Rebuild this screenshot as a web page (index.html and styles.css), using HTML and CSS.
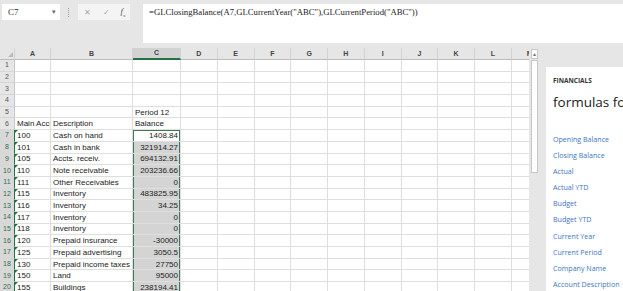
FILE: index.html
```html
<!DOCTYPE html>
<html lang="en">

<head>
    <meta charset="UTF-8">
    <title>GL Closing Balance</title>
    <link rel="stylesheet" href="styles.css">
</head>

<body>
    <div class="formula-bar">
        <div class="name-box">C7<span class="caret">&#9662;</span></div>
        <div class="grip"></div>
        <div class="fn-buttons">
            <span class="fn-x">&#10005;</span>
            <span class="fn-ok">&#10003;</span>
            <span class="fn-fx"><i>f</i><sub>x</sub></span>
        </div>
        <div class="formula-input">=GLClosingBalance(A7,GLCurrentYear("ABC"),GLCurrentPeriod("ABC"))</div>
    </div>

    <div class="workspace">
        <div class="sheet">
            <table>
                <colgroup>
                    <col class="w-rh">
                    <col class="w-a">
                    <col class="w-b">
                    <col class="w-c">
                    <col class="w-d"><col class="w-d"><col class="w-d"><col class="w-d"><col class="w-d">
                    <col class="w-d"><col class="w-d"><col class="w-d"><col class="w-d"><col class="w-d">
                </colgroup>
                <tr class="hdr">
                    <th class="corner"><span class="all"></span></th>
                    <th>A</th><th>B</th><th class="on">C</th><th>D</th><th>E</th><th>F</th><th>G</th>
                    <th>H</th><th>I</th><th>J</th><th>K</th><th>L</th><th>M</th>
                </tr>
                <tr><th>1</th><td></td><td></td><td></td><td></td><td></td><td></td><td></td><td></td><td></td><td></td><td></td><td></td><td></td></tr>
                <tr><th>2</th><td></td><td></td><td></td><td></td><td></td><td></td><td></td><td></td><td></td><td></td><td></td><td></td><td></td></tr>
                <tr><th>3</th><td></td><td></td><td></td><td></td><td></td><td></td><td></td><td></td><td></td><td></td><td></td><td></td><td></td></tr>
                <tr><th>4</th><td></td><td></td><td></td><td></td><td></td><td></td><td></td><td></td><td></td><td></td><td></td><td></td><td></td></tr>
                <tr><th>5</th><td></td><td></td><td>Period 12</td><td></td><td></td><td></td><td></td><td></td><td></td><td></td><td></td><td></td><td></td></tr>
                <tr><th>6</th><td>Main Acco</td><td>Description</td><td>Balance</td><td></td><td></td><td></td><td></td><td></td><td></td><td></td><td></td><td></td><td></td></tr>
                <tr><th class="on">7</th><td class="tri">100</td><td>Cash on hand</td><td class="num s act">1408.84</td><td></td><td></td><td></td><td></td><td></td><td></td><td></td><td></td><td></td><td></td></tr>
                <tr><th class="on">8</th><td class="tri">101</td><td>Cash in bank</td><td class="num s">321914.27</td><td></td><td></td><td></td><td></td><td></td><td></td><td></td><td></td><td></td><td></td></tr>
                <tr><th class="on">9</th><td class="tri">105</td><td>Accts. receiv.</td><td class="num s">694132.91</td><td></td><td></td><td></td><td></td><td></td><td></td><td></td><td></td><td></td><td></td></tr>
                <tr><th class="on">10</th><td class="tri">110</td><td>Note receivable</td><td class="num s">203236.66</td><td></td><td></td><td></td><td></td><td></td><td></td><td></td><td></td><td></td><td></td></tr>
                <tr><th class="on">11</th><td class="tri">111</td><td>Other Receivables</td><td class="num s">0</td><td></td><td></td><td></td><td></td><td></td><td></td><td></td><td></td><td></td><td></td></tr>
                <tr><th class="on">12</th><td class="tri">115</td><td>Inventory</td><td class="num s">483825.95</td><td></td><td></td><td></td><td></td><td></td><td></td><td></td><td></td><td></td><td></td></tr>
                <tr><th class="on">13</th><td class="tri">116</td><td>Inventory</td><td class="num s">34.25</td><td></td><td></td><td></td><td></td><td></td><td></td><td></td><td></td><td></td><td></td></tr>
                <tr><th class="on">14</th><td class="tri">117</td><td>Inventory</td><td class="num s">0</td><td></td><td></td><td></td><td></td><td></td><td></td><td></td><td></td><td></td><td></td></tr>
                <tr><th class="on">15</th><td class="tri">118</td><td>Inventory</td><td class="num s">0</td><td></td><td></td><td></td><td></td><td></td><td></td><td></td><td></td><td></td><td></td></tr>
                <tr><th class="on">16</th><td class="tri">120</td><td>Prepaid insurance</td><td class="num s">-30000</td><td></td><td></td><td></td><td></td><td></td><td></td><td></td><td></td><td></td><td></td></tr>
                <tr><th class="on">17</th><td class="tri">125</td><td>Prepaid advertising</td><td class="num s">3050.5</td><td></td><td></td><td></td><td></td><td></td><td></td><td></td><td></td><td></td><td></td></tr>
                <tr><th class="on">18</th><td class="tri">130</td><td>Prepaid income taxes</td><td class="num s">27750</td><td></td><td></td><td></td><td></td><td></td><td></td><td></td><td></td><td></td><td></td></tr>
                <tr><th class="on">19</th><td class="tri">150</td><td>Land</td><td class="num s">95000</td><td></td><td></td><td></td><td></td><td></td><td></td><td></td><td></td><td></td><td></td></tr>
                <tr><th class="on">20</th><td class="tri">155</td><td>Buildings</td><td class="num s">238194.41</td><td></td><td></td><td></td><td></td><td></td><td></td><td></td><td></td><td></td><td></td></tr>
            </table>
        </div>

        <div class="vscroll">
            <div class="scroll-up">&#9652;</div>
            <div class="scroll-thumb"></div>
        </div>

        <div class="pane">
            <div class="pane-kicker">FINANCIALS</div>
            <div class="pane-title">formulas for</div>
            <ul class="pane-links">
                <li><a href="#">Opening Balance</a></li>
                <li><a href="#">Closing Balance</a></li>
                <li><a href="#">Actual</a></li>
                <li><a href="#">Actual YTD</a></li>
                <li><a href="#">Budget</a></li>
                <li><a href="#">Budget YTD</a></li>
                <li><a href="#">Current Year</a></li>
                <li><a href="#">Current Period</a></li>
                <li><a href="#">Company Name</a></li>
                <li><a href="#">Account Description</a></li>
            </ul>
        </div>
    </div>
</body>

</html>
```

FILE: styles.css
```css
* {
    margin: 0;
    padding: 0;
    box-sizing: border-box;
    list-style: none;
}

body {
    width: 623px;
    height: 291px;
    overflow: hidden;
    background-color: #e6e6e6;
    font-family: "Liberation Sans", Arial, sans-serif;
}

/* formula bar */
.formula-bar {
    display: flex;
    align-items: flex-start;
    height: 48px;
    padding-top: 4px;
}

.name-box {
    display: flex;
    justify-content: space-between;
    align-items: center;
    width: 58px;
    height: 16px;
    margin-left: 2px;
    padding: 0 4px 0 6px;
    background-color: #fff;
    font-family: "Liberation Serif", "Times New Roman", serif;
    font-size: 9px;
    color: #333;
}

.name-box .caret {
    font-size: 7px;
    color: #666;
}

.grip {
    width: 1px;
    height: 9px;
    margin: 4px 0 0 8px;
    border-left: 1px dotted #9a9a9a;
}

.fn-buttons {
    display: flex;
    align-items: center;
    width: 52px;
    height: 16px;
    margin-left: 9px;
    background-color: #f4f4f4;
    font-size: 8px;
    color: #a8a8a8;
}

.fn-buttons span {
    text-align: center;
}

.fn-x {
    width: 18px;
}

.fn-ok {
    width: 20px;
}

.fn-fx {
    width: 14px;
    color: #555;
    font-family: "Liberation Serif", serif;
    font-size: 9px;
}

.fn-fx sub {
    font-size: 5px;
}

.formula-input {
    flex: 1;
    height: 39px;
    margin-left: 13px;
    padding: 3px 6px;
    background-color: #fff;
    font-family: "Liberation Serif", "Times New Roman", serif;
    font-size: 8.7px;
    line-height: 10px;
    color: #222;
    white-space: nowrap;
}

/* workspace */
.workspace {
    display: flex;
    align-items: flex-start;
    height: 243px;
}

.sheet {
    width: 529px;
    height: 243px;
    overflow: hidden;
    background-color: #fff;
}

.sheet table {
    table-layout: fixed;
    width: 548px;
    border-collapse: separate;
    border-spacing: 0;
    font-size: 8px;
    color: #222;
}

.w-rh { width: 15px; }
.w-a { width: 36px; }
.w-b { width: 82px; }
.w-c { width: 48px; }
.w-d { width: 36.75px; }

.sheet tr {
    height: 11.7px;
}

.sheet tr.hdr {
    height: 12px;
}

.sheet td {
    padding: 0 2px;
    line-height: 9px;
    white-space: nowrap;
    overflow: hidden;
    border-right: 1px solid #dedede;
    border-bottom: 1px solid #dedede;
    vertical-align: middle;
}

.sheet th {
    padding: 0;
    background-color: #e6e6e6;
    font-weight: normal;
    font-size: 7px;
    line-height: 8px;
    color: #555;
    text-align: center;
    border-right: 1px solid #c6c6c6;
    border-bottom: 1px solid #d6d6d6;
}

.sheet tr.hdr th {
    color: #444;
    font-weight: bold;
    border-right: 1px solid #d2d2d2;
    border-bottom: 1px solid #bdbdbd;
}

.sheet tr.hdr th.on {
    background-color: #d2d2d2;
    border-bottom: 2px solid #217346;
}

.sheet th.on {
    background-color: #d8d8d8;
    color: #2f6d47;
    border-right: 1px solid #217346;
}

.sheet th.corner {
    position: relative;
}

.corner .all {
    position: absolute;
    right: 1px;
    bottom: 2px;
    border-left: 5px solid transparent;
    border-bottom: 5px solid #b8b8b8;
}

.sheet td.num {
    text-align: right;
}

.sheet td.s {
    background-color: #d4d4d4;
    box-shadow: inset 1px 0 #3d7a55, inset -1px 0 #3d7a55;
}

.sheet td.act {
    background-color: #fff;
    box-shadow: inset 1px 0 #3d7a55, inset -1px 0 #3d7a55, inset 0 1px #3d7a55;
}

.sheet td.tri {
    position: relative;
}

.sheet td.tri::before {
    content: "";
    position: absolute;
    left: 0;
    top: 0;
    border-top: 3px solid #1f7244;
    border-right: 3px solid transparent;
}

/* vertical scroll bar */
.vscroll {
    width: 11px;
    height: 243px;
    padding-left: 2px;
}

.scroll-up {
    width: 7px;
    height: 10px;
    margin-top: 1px;
    background-color: #fff;
    border: 1px solid #c6c6c6;
    font-size: 6px;
    line-height: 8px;
    text-align: center;
    color: #777;
}

.scroll-thumb {
    width: 7px;
    height: 113px;
    margin-top: 1px;
    background-color: #fff;
    border: 1px solid #c6c6c6;
}

/* task pane */
.pane {
    flex: 1;
    height: 224px;
    margin: 19px 0 0 6px;
    padding: 10px 0 0 7px;
    background-color: #fff;
    overflow: hidden;
    font-family: "Open Sans", "Noto Sans", sans-serif;
}

.pane-kicker {
    font-size: 6.5px;
    line-height: 8px;
    font-weight: bold;
    color: #333;
}

.pane-title {
    margin-top: 8px;
    font-size: 13.5px;
    line-height: 18px;
    color: #222;
    white-space: nowrap;
}

.pane-links {
    margin-top: 17px;
}

.pane-links li {
    height: 16.1px;
    line-height: 16.1px;
    white-space: nowrap;
}

.pane-links a {
    font-size: 7.1px;
    color: #3d76c1;
    text-decoration: none;
}
```
